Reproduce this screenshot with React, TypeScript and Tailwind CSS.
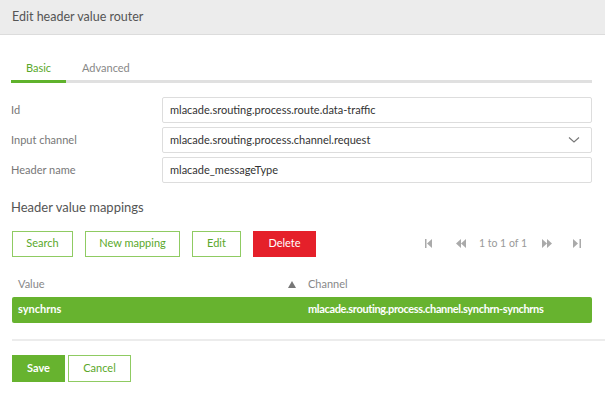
import React from "react";

const F = { fontFamily: 'Lato, "Open Sans", sans-serif' };

function Field({ label, value, select }: { label: string; value: string; select?: boolean }) {
  return (
    <div className="flex items-center h-[26px]">
      <div className="w-[151px] text-[11px] text-[#777]">{label}</div>
      <div className="flex-1 h-full border border-[#ddd] rounded-[2px] flex items-center pl-[7px] pr-[10px] text-[11px] text-[#333]">
        <span className="flex-1">{value}</span>
        {select && (
          <svg width="12" height="8" viewBox="0 0 12 8" className="mr-[1px]">
            <path d="M1 1.5 L6 6 L11 1.5" fill="none" stroke="#777" strokeWidth="1.1" />
          </svg>
        )}
      </div>
    </div>
  );
}

function OutBtn({ children, w }: { children: React.ReactNode; w: string }) {
  return (
    <div className={`${w} h-[26px] border border-[#8fcb62] flex items-center justify-center text-[11px] text-[#5aa82a]`}>
      {children}
    </div>
  );
}

export default function App() {
  return (
    <div className="w-[605px] h-[396px] bg-white overflow-hidden" style={F}>
      <div className="h-[35px] bg-[#ececec] border-b border-[#dcdcdc] flex items-center pl-[12px] text-[12.5px] text-[#555]">
        Edit header value router
      </div>
      <div className="px-[12px] pr-[13px]">
        <div className="mt-[21px] flex border-b-[3px] border-[#e0e0e0] h-[27px] -ml-[1px]">
          <div className="w-[55px] flex justify-center pt-[4px] text-[11px] text-[#5aa82a] border-b-[3px] border-[#5fb22c] -mb-[3px]">Basic</div>
          <div className="pl-[16px] pt-[4px] text-[11px] text-[#888]">Advanced</div>
        </div>
        <div className="mt-[14px] flex flex-col gap-[4px] -ml-[1px]">
          <Field label="Id" value="mlacade.srouting.process.route.data-traffic" />
          <Field label="Input channel" value="mlacade.srouting.process.channel.request" select />
          <Field label="Header name" value="mlacade_messageType" />
        </div>
        <div className="mt-[15px] text-[13px] text-[#555] -ml-[1px]">Header value mappings</div>
        <div className="mt-[13px] flex items-center">
          <div className="flex gap-[12px]">
            <OutBtn w="w-[61px]">Search</OutBtn>
            <OutBtn w="w-[95px]">New mapping</OutBtn>
            <OutBtn w="w-[49px]">Edit</OutBtn>
            <div className="w-[63px] h-[26px] bg-[#e5202a] flex items-center justify-center text-[11px] text-white">Delete</div>
          </div>
          <div className="flex-1 flex items-center justify-end text-[10.5px] text-[#999] pr-[11px]">
            <svg width="8" height="9" viewBox="0 0 8 9" className="mr-[23px]"><rect x="0" y="0" width="1.5" height="9" fill="#aaa" /><path d="M7 0 L2 4.5 L7 9Z" fill="#aaa" /></svg>
            <svg width="10" height="9" viewBox="0 0 10 9" className="mr-[13px]"><path d="M5 0 L0 4.5 L5 9Z M10 0 L5 4.5 L10 9Z" fill="#aaa" /></svg>
            <span>1 to 1 of 1</span>
            <svg width="10" height="9" viewBox="0 0 10 9" className="ml-[15px] mr-[21px]"><path d="M0 0 L5 4.5 L0 9Z M5 0 L10 4.5 L5 9Z" fill="#aaa" /></svg>
            <svg width="8" height="9" viewBox="0 0 8 9"><path d="M0 0 L5 4.5 L0 9Z" fill="#aaa" /><rect x="6.5" y="0" width="1.5" height="9" fill="#aaa" /></svg>
          </div>
        </div>
        <div className="mt-[19px] flex items-center h-[18px] text-[11px] text-[#888]">
          <div className="w-[296px] pl-[6px] flex items-center">
            <span className="flex-1">Value</span>
            <svg width="8" height="7" viewBox="0 0 8 7" className="mr-[12px]"><path d="M4 0 L8 7 L0 7Z" fill="#777" /></svg>
          </div>
          <div>Channel</div>
        </div>
        <div className="mt-[3px] h-[26px] bg-[#67b32f] rounded-[2px] flex items-center text-[11px] font-bold text-white">
          <div className="w-[296px] pl-[6px]">synchrns</div>
          <div className="whitespace-nowrap tracking-[-0.35px]">mlacade.srouting.process.channel.synchrn-synchrns</div>
        </div>
      </div>
      <div className="mt-[16px] ml-[12px] border-t-2 border-[#ececec]" />
      <div className="mt-[14px] ml-[12px] flex gap-[3px]">
        <div className="w-[53px] h-[27px] bg-[#67b32f] flex items-center justify-center text-[11px] font-bold text-white">Save</div>
        <div className="w-[63px] h-[27px] border border-[#8fcb62] flex items-center justify-center text-[11px] text-[#5aa82a]">Cancel</div>
      </div>
    </div>
  );
}
